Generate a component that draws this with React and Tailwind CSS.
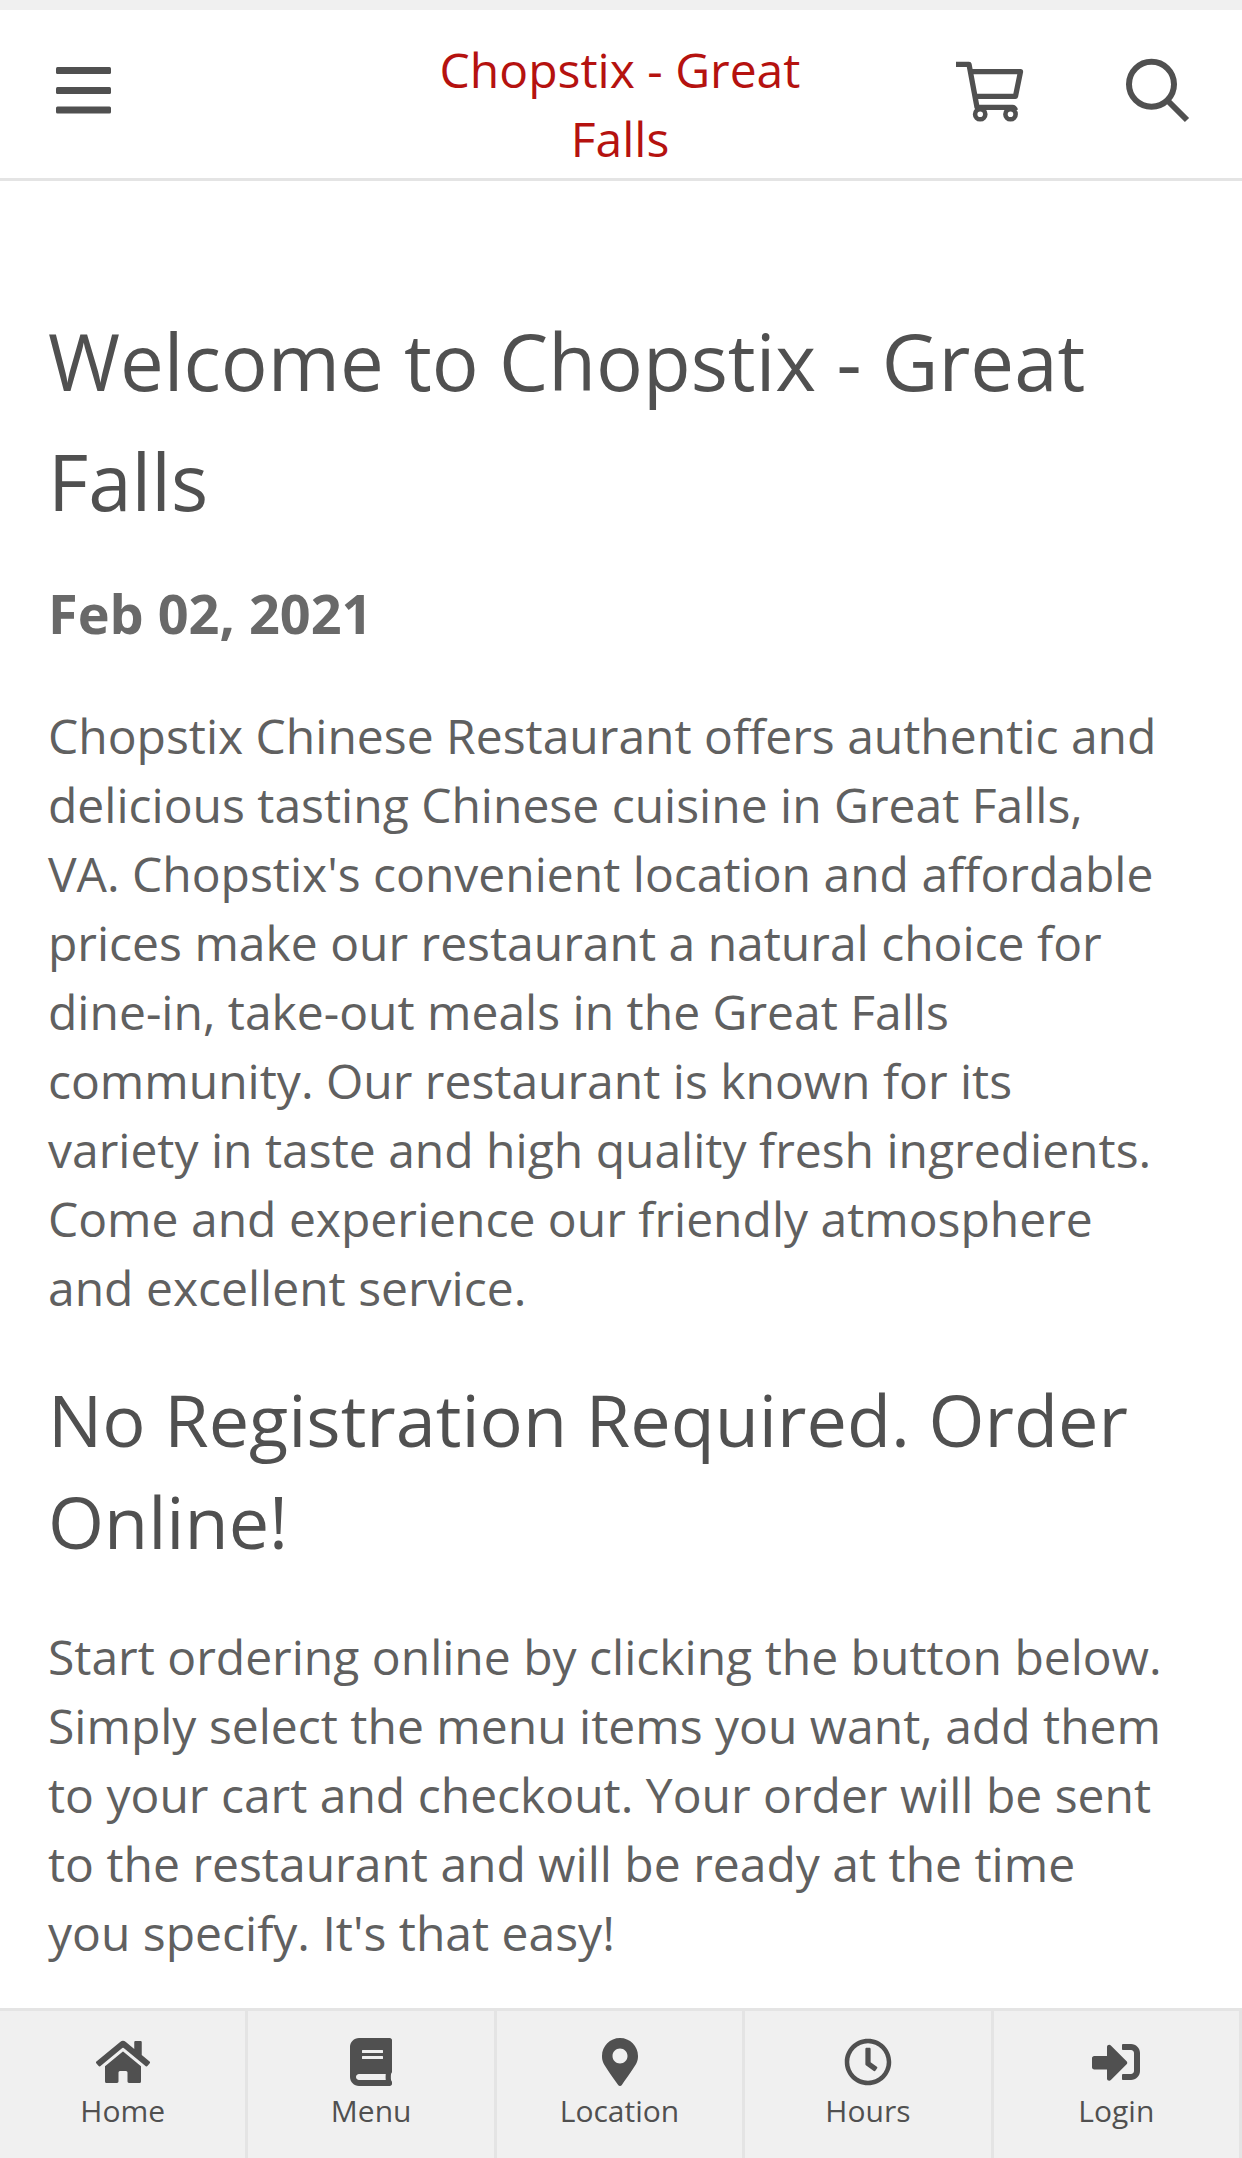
import React from 'react';
import { FaHome, FaBook, FaMapMarkerAlt, FaRegClock, FaSignInAlt } from 'react-icons/fa';

const tabs = [
  { label: 'Home', icon: <FaHome size={54} /> },
  { label: 'Menu', icon: <FaBook size={48} /> },
  { label: 'Location', icon: <FaMapMarkerAlt size={48} /> },
  { label: 'Hours', icon: <FaRegClock size={48} /> },
  { label: 'Login', icon: <FaSignInAlt size={48} /> },
];

const App = () => {
  return (
    <div className="flex h-[2158px] w-[1242px] flex-col overflow-hidden bg-white font-['Open_Sans',sans-serif] text-[#606060]">
      <div className="h-[10px] shrink-0 bg-[#f0f0f0]" />
      <header className="flex h-[171px] shrink-0 border-b-3 border-[#e4e4e4]">
        <button className="flex w-[420px] items-start pt-[57px] pl-[56px]">
          <svg width="55" height="47" viewBox="0 0 55 47" fill="#505050">
            <rect width="55" height="7" rx="1.5" />
            <rect y="20" width="55" height="7" rx="1.5" />
            <rect y="39.5" width="55" height="7" rx="1.5" />
          </svg>
        </button>
        <h1 className="w-[400px] pt-[25px] text-center text-[48px] leading-[69px] text-[#b5120f]">
          Chopstix - Great<br />Falls
        </h1>
        <div className="flex flex-1 pt-[48px] pl-[136px] text-[#505050]">
          <svg width="68" height="64" viewBox="0 0 68 64" fill="none" stroke="currentColor" strokeWidth="5.3" strokeLinejoin="round">
            <path d="M0 6.3h13L21 49.3h35.5q2 0 3 3M15.5 13.7h49L59.5 38.3H19.5" />
            <circle cx="24.2" cy="56.2" r="5.1" strokeWidth="4.6" />
            <circle cx="54.5" cy="56.2" r="5.1" strokeWidth="4.6" />
          </svg>
          <svg className="ml-[101px]" width="66" height="66" viewBox="0 0 66 66" fill="none" stroke="currentColor" strokeWidth="6">
            <circle cx="26.5" cy="26.3" r="22.5" />
            <path d="M43.5 43.5L62 62" />
          </svg>
        </div>
      </header>

      <main className="flex-1 px-[48px] pt-[120px]">
        <h2 className="text-[78px] leading-[120px] text-[#505050]">
          Welcome to Chopstix - Great<br />Falls
        </h2>
        <h3 className="mt-[34px] text-[54px] leading-[76px] font-bold text-[#696969]">Feb 02, 2021</h3>
        <p className="mt-[50px] text-[48px] leading-[69px] whitespace-nowrap">
          Chopstix Chinese Restaurant offers authentic and<br />
          delicious tasting Chinese cuisine in Great Falls,<br />
          VA. Chopstix's convenient location and affordable<br />
          prices make our restaurant a natural choice for<br />
          dine-in, take-out meals in the Great Falls<br />
          community. Our restaurant is known for its<br />
          variety in taste and high quality fresh ingredients.<br />
          Come and experience our friendly atmosphere<br />
          and excellent service.
        </p>
        <h2 className="mt-[46px] text-[72px] leading-[102px] text-[#505050]">
          No Registration Required. Order<br />Online!
        </h2>
        <p className="mt-[50px] text-[48px] leading-[69px] whitespace-nowrap">
          Start ordering online by clicking the button below.<br />
          Simply select the menu items you want, add them<br />
          to your cart and checkout. Your order will be sent<br />
          to the restaurant and will be ready at the time<br />
          you specify. It's that easy!
        </p>
      </main>

      <nav className="flex h-[150px] shrink-0 border-t-3 border-[#e4e4e4] bg-[#f0f0f0]">
        {tabs.map((tab) => (
          <a key={tab.label} className="flex flex-1 flex-col items-center border-r-3 border-[#e4e4e4] pt-[27px] text-[#505050]">
            <span className="flex h-[48px] items-center">{tab.icon}</span>
            <span className="mt-[4px] text-[30px] leading-[42px]">{tab.label}</span>
          </a>
        ))}
      </nav>
    </div>
  );
};

export default App;
